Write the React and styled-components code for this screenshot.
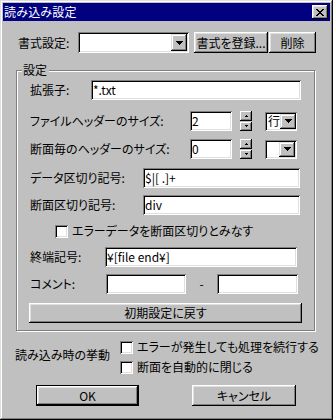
import React from 'react';
import styled, { createGlobalStyle } from 'styled-components';

const Global = createGlobalStyle`
  html, body { margin: 0; padding: 0; background: #c0c0c0; }
  * { box-sizing: border-box; }
`;

const Window = styled.div`
  width: 333px;
  height: 420px;
  background: #c0c0c0;
  padding: 3px;
  display: flex;
  flex-direction: column;
  box-shadow: inset -1px -1px #000, inset 1px 1px #dfdfdf, inset -2px -2px #808080, inset 2px 2px #fff;
  font-family: "Noto Sans CJK JP", "Liberation Sans", sans-serif;
  font-size: 12px;
  line-height: 14px;
  color: #000;
  font-feature-settings: "palt";
`;

const TitleBar = styled.div`
  height: 18px;
  background: #000080;
  color: #fff;
  display: flex;
  align-items: center;
  justify-content: space-between;
  padding: 0 2px 0 1px;
`;

const TitleText = styled.span`
  font-size: 12px;
  letter-spacing: 0.2px;
`;

const CloseBtn = styled.div`
  width: 16px;
  height: 14px;
  background: #c0c0c0;
  display: flex;
  align-items: center;
  justify-content: center;
  box-shadow: inset -1px -1px #000, inset 1px 1px #fff, inset -2px -2px #808080, inset 2px 2px #dfdfdf;
`;

const TopRow = styled.div`
  display: flex;
  align-items: center;
  margin-top: 11px;
  padding-left: 15px;
  height: 21px;
`;

const Label = styled.span`
  width: ${p => p.$w}px;
  flex: none;
  white-space: nowrap;
`;

const Sunken = styled.div`
  width: ${p => p.$w}px;
  height: ${p => p.$h || 20}px;
  background: #fff;
  flex: none;
  display: flex;
  align-items: center;
  padding: 0 2px 0 2px;
  box-shadow: inset 1px 1px #808080, inset -1px -1px #fff, inset 2px 2px #000, inset -2px -2px #dfdfdf;
  white-space: nowrap;
  overflow: hidden;
`;

const FieldText = styled.span`
  flex: 1;
  padding-left: ${p => p.$pl ?? 0}px;
`;

const DropBtn = styled.div`
  width: 16px;
  height: ${p => p.$h || 17}px;
  flex: none;
  background: #c0c0c0;
  display: flex;
  align-items: center;
  justify-content: center;
  box-shadow: inset -1px -1px #000, inset 1px 1px #dfdfdf, inset -2px -2px #808080, inset 2px 2px #fff;
`;

const Button = styled.div`
  width: ${p => p.$w}px;
  height: ${p => p.$h || 21}px;
  margin-left: ${p => p.$ml || 0}px;
  flex: none;
  display: flex;
  align-items: center;
  justify-content: center;
  background: #c0c0c0;
  white-space: nowrap;
  border: ${p => (p.$default ? '1px solid #000' : 'none')};
  box-shadow: inset -1px -1px #000, inset 1px 1px #fff, inset -2px -2px #808080, inset 2px 2px #dfdfdf;
`;

const Group = styled.div`
  position: relative;
  margin: 17px 0 0 13px;
  width: 299px;
  height: 261px;
  border: 1px solid #808080;
  box-shadow: inset 1px 1px #fff, 1px 1px #fff;
  display: flex;
  flex-direction: column;
`;

const Legend = styled.span`
  position: absolute;
  top: -8px;
  left: 5px;
  padding: 0 2px 0 1px;
  background: #c0c0c0;
`;

const Row = styled.div`
  display: flex;
  align-items: center;
  height: ${p => p.$h || 20}px;
  margin-top: ${p => p.$mt}px;
  padding-left: ${p => p.$pl ?? 13}px;
`;

const SpinWrap = styled.div`
  display: flex;
  flex-direction: column;
  margin-left: 8px;
  width: 12px;
  height: 20px;
  gap: 1px;
`;

const SpinHalf = styled.div`
  flex: 1;
  background: #c0c0c0;
  display: flex;
  align-items: center;
  justify-content: center;
  box-shadow: inset -1px -1px #000, inset 1px 1px #fff, inset -2px -2px #808080;
`;

const UnitCombo = styled(Sunken)`
  margin-left: 13px;
  padding: 0 2px 0 3px;
`;

const Check = styled.div`
  width: 13px;
  height: 13px;
  flex: none;
  background: #fff;
  box-shadow: inset 1px 1px #808080, inset -1px -1px #fff, inset 2px 2px #000, inset -2px -2px #dfdfdf;
`;

const CheckLabel = styled.span`
  margin-left: ${p => p.$gap || 4}px;
  white-space: nowrap;
`;

const Dash = styled.span`
  width: 31px;
  text-align: center;
  flex: none;
`;

const Behavior = styled.div`
  display: flex;
  margin-top: 6px;
  padding-left: 12px;
`;

const BehaviorLabel = styled.span`
  width: 105px;
  flex: none;
  align-self: center;
  padding-bottom: 4px;
  white-space: nowrap;
`;

const CheckColumn = styled.div`
  display: flex;
  flex-direction: column;
`;

const CheckRow = styled.div`
  display: flex;
  align-items: center;
  height: 20px;
`;

const Footer = styled.div`
  display: flex;
  margin-top: 8px;
  padding-left: 33px;
`;

const DownArrow = () => (
  <svg width="7" height="4" viewBox="0 0 7 4" shapeRendering="crispEdges">
    <path d="M0 0h7v1h-1v1h-1v1h-1v1h-1v-1h-1v-1h-1v-1h-1z" fill="#000" />
  </svg>
);

const SpinUp = () => (
  <svg width="3" height="2" viewBox="0 0 3 2" shapeRendering="crispEdges">
    <path d="M1 0h1v1h1v1h-3v-1h1z" fill="#000" />
  </svg>
);

const SpinDown = () => (
  <svg width="3" height="2" viewBox="0 0 3 2" shapeRendering="crispEdges">
    <path d="M0 0h3v1h-1v1h-1v-1h-1z" fill="#000" />
  </svg>
);

const CloseX = () => (
  <svg width="8" height="7" viewBox="0 0 8 7" shapeRendering="crispEdges">
    <path d="M0 0h2v1h1v1h2v-1h1v-1h2v1h-1v1h-1v1h-1v1h1v1h1v1h1v1h-2v-1h-1v-1h-2v1h-1v1h-2v-1h1v-1h1v-1h1v-1h-1v-1h-1v-1h-1z" fill="#000" />
  </svg>
);

const Spinner = () => (
  <SpinWrap>
    <SpinHalf><SpinUp /></SpinHalf>
    <SpinHalf><SpinDown /></SpinHalf>
  </SpinWrap>
);

export default function App() {
  return (
    <>
      <Global />
      <Window>
        <TitleBar>
          <TitleText>読み込み設定</TitleText>
          <CloseBtn><CloseX /></CloseBtn>
        </TitleBar>

        <TopRow>
          <Label $w={60}>書式設定:</Label>
          <Sunken $w={111} $h={21}>
            <FieldText />
            <DropBtn><DownArrow /></DropBtn>
          </Sunken>
          <Button $w={74} $ml={5}>書式を登録...</Button>
          <Button $w={47} $ml={1}>削除</Button>
        </TopRow>

        <Group>
          <Legend>設定</Legend>
          <Row $mt={9}>
            <Label $w={61}>拡張子:</Label>
            <Sunken $w={210}><FieldText>*.txt</FieldText></Sunken>
          </Row>
          <Row $mt={11}>
            <Label $w={160}>ファイルヘッダーのサイズ:</Label>
            <Sunken $w={42}><FieldText>2</FieldText></Sunken>
            <Spinner />
            <UnitCombo $w={32} $h={19}>
              <FieldText>行</FieldText>
              <DropBtn $h={15}><DownArrow /></DropBtn>
            </UnitCombo>
          </Row>
          <Row $mt={8}>
            <Label $w={160}>断面毎のヘッダーのサイズ:</Label>
            <Sunken $w={42}><FieldText>0</FieldText></Sunken>
            <Spinner />
            <UnitCombo $w={32} $h={19}>
              <FieldText />
              <DropBtn $h={15}><DownArrow /></DropBtn>
            </UnitCombo>
          </Row>
          <Row $mt={9}>
            <Label $w={113}>データ区切り記号:</Label>
            <Sunken $w={157}><FieldText>$|[ .]+</FieldText></Sunken>
          </Row>
          <Row $mt={7}>
            <Label $w={113}>断面区切り記号:</Label>
            <Sunken $w={157}><FieldText>div</FieldText></Sunken>
          </Row>
          <Row $mt={7} $h={18} $pl={38}>
            <Check />
            <CheckLabel>エラーデータを断面区切りとみなす</CheckLabel>
          </Row>
          <Row $mt={7}>
            <Label $w={75}>終端記号:</Label>
            <Sunken $w={192}><FieldText>¥[file end¥]</FieldText></Sunken>
          </Row>
          <Row $mt={7}>
            <Label $w={76}>コメント:</Label>
            <Sunken $w={80} />
            <Dash>-</Dash>
            <Sunken $w={81} />
          </Row>
          <Row $mt={9} $pl={12}>
            <Button $w={273} $h={20}>初期設定に戻す</Button>
          </Row>
        </Group>

        <Behavior>
          <BehaviorLabel>読み込み時の挙動</BehaviorLabel>
          <CheckColumn>
            <CheckRow>
              <Check />
              <CheckLabel>エラーが発生しても処理を続行する</CheckLabel>
            </CheckRow>
            <CheckRow>
              <Check />
              <CheckLabel>断面を自動的に閉じる</CheckLabel>
            </CheckRow>
          </CheckColumn>
        </Behavior>

        <Footer>
          <Button $w={103} $default>OK</Button>
          <Button $w={104} $ml={53}>キャンセル</Button>
        </Footer>
      </Window>
    </>
  );
}
